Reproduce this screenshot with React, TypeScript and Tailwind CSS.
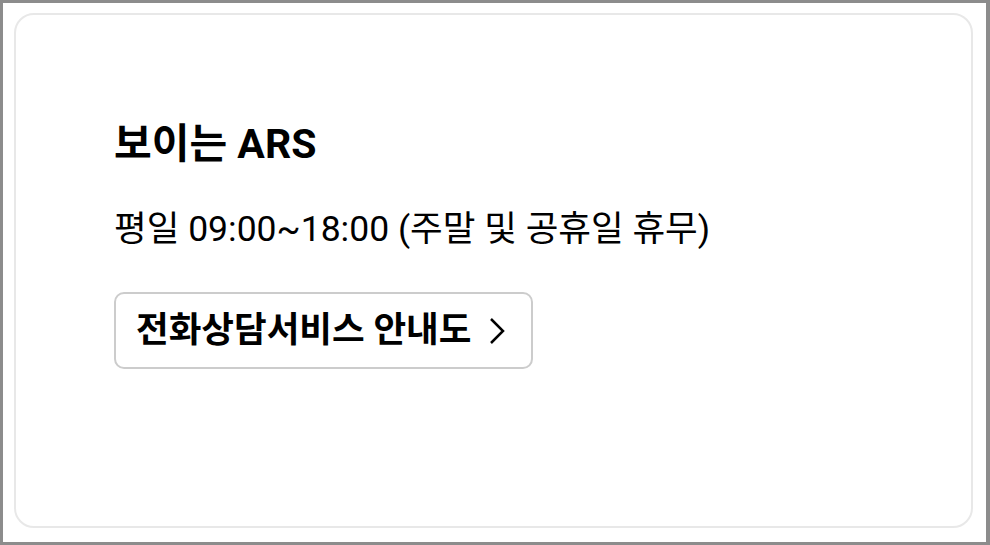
export default function App() {
  return (
    <div
      className="w-[990px] h-[545px] flex border-[3px] border-r-4 border-[#8c8c8c] bg-white pt-[10px] pl-[11px] pr-[13px] pb-[14px]"
      style={{ fontFamily: 'Roboto, "Noto Sans CJK KR", sans-serif' }}
    >
      <section className="flex-1 border-2 border-[#e8e8e8] rounded-[20px] pl-[98px] pt-[105px] text-black">
        <h2 className="text-[41px] leading-[48px] font-bold">보이는 ARS</h2>
        <p className="mt-[39px] text-[35.5px] leading-[44px]">평일 09:00~18:00 (주말 및 공휴일 휴무)</p>
        <button className="mt-[41px] h-[77px] w-[419px] flex items-center gap-[18px] border-2 border-[#cccccc] rounded-[10px] pl-[20px] text-[35.5px] font-bold">
          <span>전화상담서비스 안내도</span>
          <svg width="16" height="28" viewBox="0 0 16 28" fill="none" stroke="currentColor" strokeWidth="2.5">
            <path d="M2 2 L14 14 L2 26" />
          </svg>
        </button>
      </section>
    </div>
  );
}
